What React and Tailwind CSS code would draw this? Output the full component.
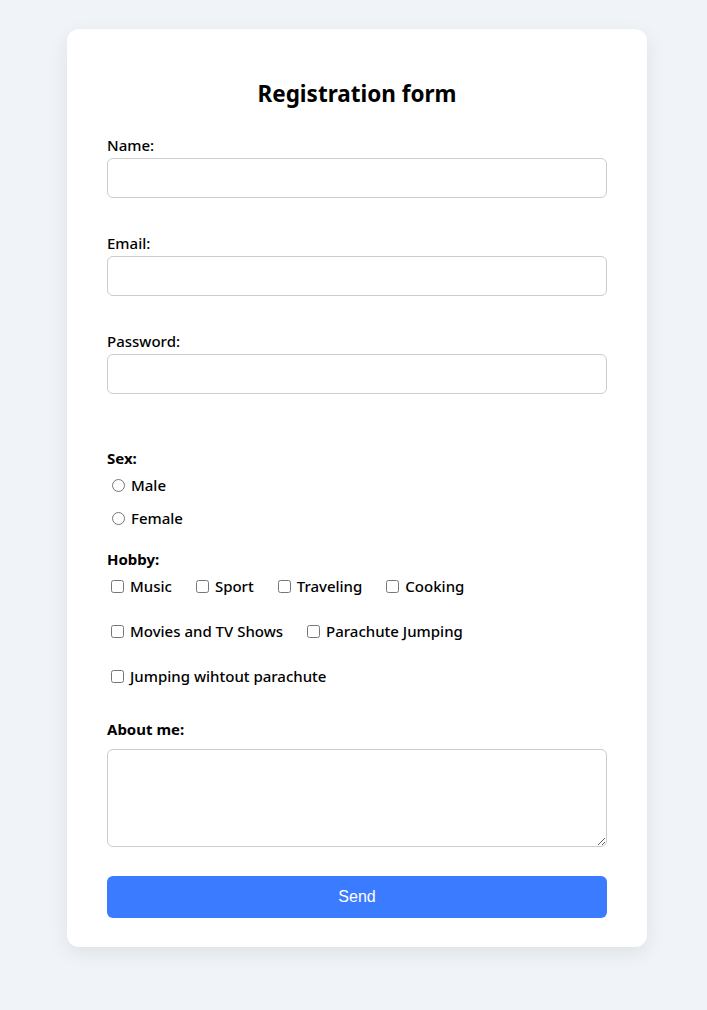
import React from 'react';

const font = { fontFamily: '"Noto Sans", "Open Sans", sans-serif' };

const Field = ({ label, type = 'text', first }) => (
  <div className={first ? '' : 'mt-[35px]'}>
    <label className="block text-[15px] font-medium leading-5 text-black mb-[3px]">{label}</label>
    <input type={type} className="block w-full h-10 border border-[#cccccc] rounded-md px-3 bg-white" />
  </div>
);

const hobbies = [
  ['Music', 'Sport', 'Traveling', 'Cooking'],
  ['Movies and TV Shows', 'Parachute Jumping'],
  ['Jumping wihtout parachute'],
];

export default function App() {
  return (
    <div className="min-h-[1010px] bg-[#f0f4f8] pt-[29px] pb-[63px]" style={font}>
      <form className="ml-[67px] w-[580px] bg-white rounded-xl shadow-[0_6px_20px_rgba(0,0,0,0.08)] px-10 pt-[51px] pb-[29px]">
        <h2 className="text-center text-[22.5px] font-bold leading-7 text-black mb-[27px]">Registration form</h2>

        <Field label="Name:" first />
        <Field label="Email:" type="email" />
        <Field label="Password:" type="password" />

        <div className="mt-[54px] text-[15px] font-bold leading-5">Sex:</div>
        <div className="mt-[5px] flex flex-col gap-[9px]">
          {['Male', 'Female'].map(s => (
            <label key={s} className="flex items-center h-6 text-[15px] font-medium">
              <input type="radio" name="sex" className="ml-[5px] mr-[6px] w-[13px] h-[13px]" />
              {s}
            </label>
          ))}
        </div>

        <div className="mt-[19px] text-[15px] font-bold leading-5">Hobby:</div>
        <div className="mt-[5px] flex flex-col gap-[21px]">
          {hobbies.map((row, i) => (
            <div key={i} className="flex items-center h-6 gap-5">
              {row.map(h => (
                <label key={h} className="flex items-center text-[15px] font-medium">
                  <input type="checkbox" className="ml-1 mr-[6px] w-[13px] h-[13px]" />
                  {h}
                </label>
              ))}
            </div>
          ))}
        </div>

        <div className="mt-[31px] text-[15px] font-bold leading-5">About me:</div>
        <textarea className="mt-[10px] block w-full h-[98px] border border-[#cccccc] rounded-md p-2" />

        <button
          type="button"
          className="mt-[29px] block w-full h-[42px] rounded-md bg-[#3b7bff] text-white text-[16px]"
          style={{ fontFamily: '"Liberation Sans", Arial, sans-serif' }}
        >
          Send
        </button>
      </form>
    </div>
  );
}
